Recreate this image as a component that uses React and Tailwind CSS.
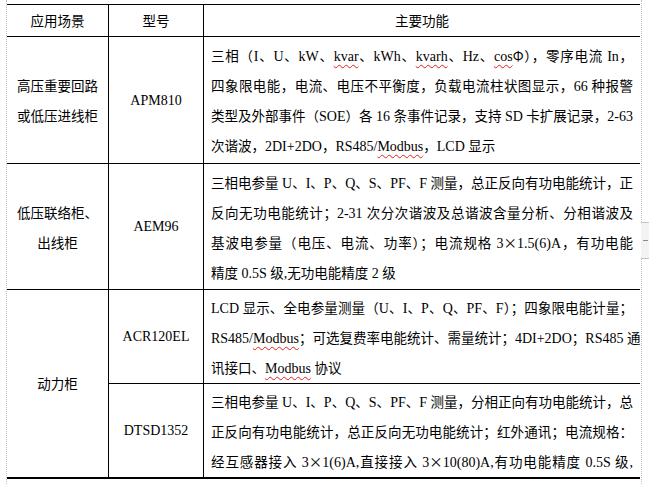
import React from 'react';

const cjk = "font-['Noto_Sans_CJK_SC',sans-serif]";

// Latin runs get a thin serif, closer to the SimSun Latin glyphs of the original
const Latin = ({ children, wavy }) => (
    <span
        className={
            "font-['Liberation_Serif',serif] text-[14px] " +
            (wavy ? 'underline decoration-wavy decoration-[#e02020] decoration-1 underline-offset-[3px]' : '')
        }
    >
        {children}
    </span>
);

// ~word~ marks a word with the spell-check squiggle
const Txt = ({ s }) =>
    s.split(/(~[^~]+~)/).map((part, i) => {
        if (part.length > 2 && part.startsWith('~') && part.endsWith('~')) {
            return <Latin key={i} wavy>{part.slice(1, -1)}</Latin>;
        }
        return part.split(/([\u0020-\u007D]+)/).map((p, j) =>
            /^[\u0020-\u007D]+$/.test(p) ? <Latin key={i + '-' + j}>{p}</Latin> : <span key={i + '-' + j}>{p}</span>
        );
    });

const Lines = ({ lines, justifyLast }) => (
    <div className="flex flex-col justify-center h-full pl-[7px] pr-[7px]">
        {lines.map((line, i) => {
            const full = i < lines.length - 1 || justifyLast;
            return (
                <div
                    key={i}
                    className={
                        'h-[30px] leading-[30px] whitespace-nowrap ' +
                        (full ? 'text-justify [text-align-last:justify]' : 'text-left')
                    }
                >
                    <Txt s={line} />
                </div>
            );
        })}
    </div>
);

const rows = {
    apm: [
        '三相（I、U、kW、~kvar~、kWh、~kvarh~、Hz、~cos~Φ），零序电流 In，',
        '四象限电能，电流、电压不平衡度，负载电流柱状图显示，66 种报警',
        '类型及外部事件（SOE）各 16 条事件记录，支持 SD 卡扩展记录，2-63',
        '次谐波，2DI+2DO，RS485/~Modbus~，LCD 显示',
    ],
    aem: [
        '三相电参量 U、I、P、Q、S、PF、F 测量，总正反向有功电能统计，正',
        '反向无功电能统计；2-31 次分次谐波及总谐波含量分析、分相谐波及',
        '基波电参量（电压、电流、功率）；电流规格 3×1.5(6)A，有功电能',
        '精度 0.5S 级,无功电能精度 2 级',
    ],
    acr: [
        'LCD 显示、全电参量测量（U、I、P、Q、PF、F）；四象限电能计量；',
        'RS485/~Modbus~；可选复费率电能统计、需量统计；4DI+2DO；RS485 通',
        '讯接口、~Modbus~ 协议',
    ],
    dtsd: [
        '三相电参量 U、I、P、Q、S、PF、F 测量，分相正向有功电能统计，总',
        '正反向有功电能统计，总正反向无功电能统计；红外通讯；电流规格：',
        '经互感器接入 3×1(6)A,直接接入 3×10(80)A,有功电能精度 0.5S 级,',
    ],
};

const cell = 'border-t border-black';
const center = 'flex items-center justify-center text-center';

export default function App() {
    return (
        <div className={'relative w-[649px] h-[484px] bg-white overflow-hidden text-[13.5px] text-black ' + cjk}>
            <div className="ml-[6px] w-[636px] h-[484px] border-x border-dotted border-[#bdbdbd] pt-[4px]">
                <div className="grid grid-cols-[101px_95px_437px] grid-rows-[32px_127px_126px_94px_96px]">
                    {/* header */}
                    <div className={cell + ' ' + center}>应用场景</div>
                    <div className={cell + ' border-l ' + center}>型号</div>
                    <div className={cell + ' border-l ' + center}>主要功能</div>

                    {/* APM810 */}
                    <div className={cell + ' ' + center}>
                        <div className="leading-[30px]">
                            <div>高压重要回路</div>
                            <div>或低压进线柜</div>
                        </div>
                    </div>
                    <div className={cell + ' border-l ' + center}>
                        <Latin>APM810</Latin>
                    </div>
                    <div className={cell + ' border-l'}>
                        <Lines lines={rows.apm} />
                    </div>

                    {/* AEM96 */}
                    <div className={cell + ' ' + center}>
                        <div className="leading-[30px]">
                            <div>低压联络柜、</div>
                            <div>出线柜</div>
                        </div>
                    </div>
                    <div className={cell + ' border-l ' + center}>
                        <Latin>AEM96</Latin>
                    </div>
                    <div className={cell + ' border-l'}>
                        <Lines lines={rows.aem} />
                    </div>

                    {/* power cabinet */}
                    <div className={cell + ' row-span-2 border-b-2 ' + center}>动力柜</div>
                    <div className={cell + ' border-l ' + center}>
                        <Latin>ACR120EL</Latin>
                    </div>
                    <div className={cell + ' border-l'}>
                        <Lines lines={rows.acr} />
                    </div>
                    <div className={cell + ' border-l border-b-2 ' + center}>
                        <Latin>DTSD1352</Latin>
                    </div>
                    <div className={cell + ' border-l border-b-2'}>
                        <Lines lines={rows.dtsd} justifyLast />
                    </div>
                </div>
            </div>

            {/* table handle on the right margin */}
            <div className="absolute left-[641px] top-[222px] w-[8px] h-[37px] bg-[#f3f3f3] border-y border-[#c4c4c4] flex flex-col">
                <div className="h-[17px]" />
                <div className="ml-[2px] w-[5px] h-px bg-[#8a8a8a]" />
            </div>
        </div>
    );
}
